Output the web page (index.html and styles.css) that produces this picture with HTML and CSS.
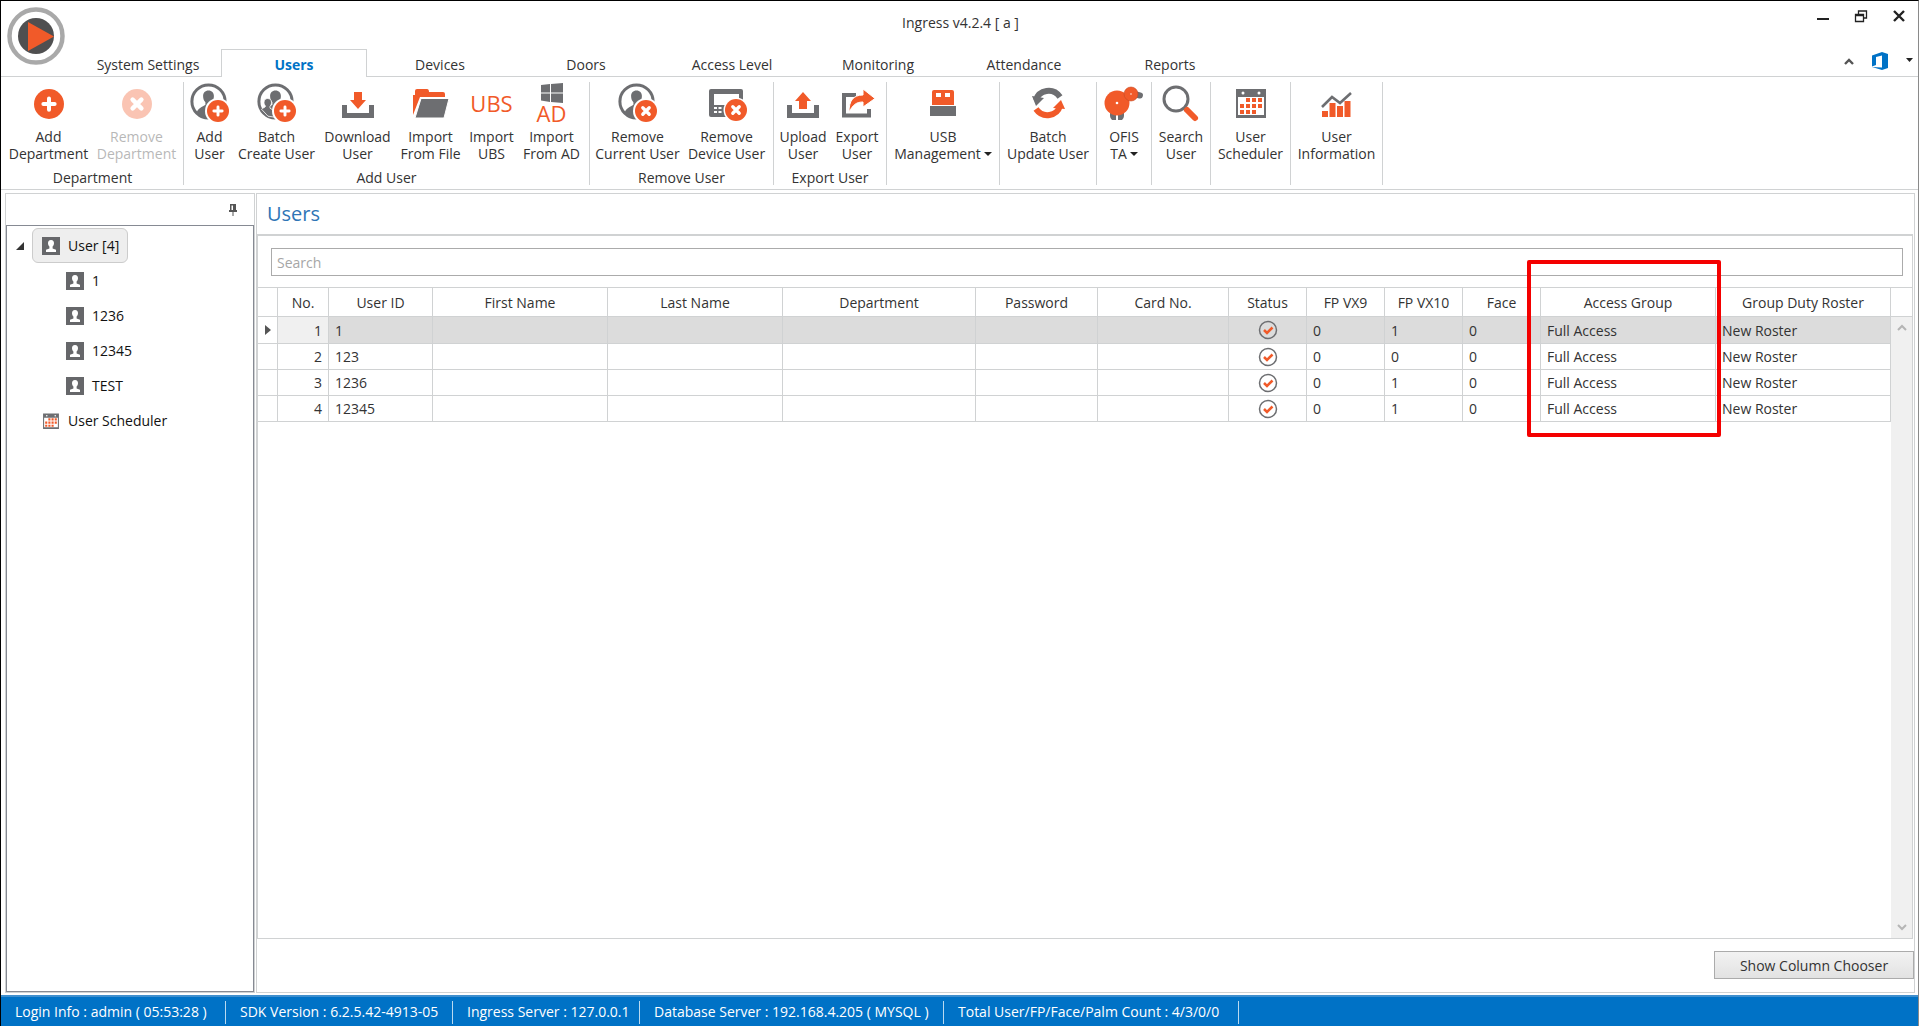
FILE: index.html
```html
<!DOCTYPE html>
<html lang="en">

<head>
    <meta charset="UTF-8">
    <meta name="viewport" content="width=device-width, initial-scale=1.0">
    <title>Ingress v4.2.4 [ a ]</title>
    <link rel="stylesheet" href="styles.css">
</head>

<body>
    <!-- Icon sprite -->
    <svg class="sprite" aria-hidden="true">
        <symbol id="i-plus" viewBox="0 0 24 24">
            <circle cx="12" cy="12" r="12" fill="#f15a29"/>
            <path d="M12 7.500v9M7.500 12h9" stroke="#fff" stroke-width="3.200" stroke-linecap="round"/>
        </symbol>
        <symbol id="i-cross" viewBox="0 0 24 24">
            <circle cx="12" cy="12" r="12" fill="#f15a29"/>
            <path d="M8.500 8.500l7 7M15.500 8.500l-7 7" stroke="#fff" stroke-width="3.600" stroke-linecap="round"/>
        </symbol>
        <symbol id="i-head" viewBox="0 0 40 40">
            <circle cx="18.500" cy="18.500" r="16.600" fill="#fff" stroke="#6d6e71" stroke-width="3"/>
            <path d="M18.500 7.500c3.400 0 5.400 2.400 5.400 5.600 0 2.700-.9 5-2.300 6.200v2.400c2.600 1.600 6.900 2.300 7.900 5.800v5.500l-9 3.400-9.500-1.900-4.500-4c.6-5.500 6.200-6.500 8.900-8.800v-2.400c-1.400-1.200-2.300-3.500-2.300-6.200 0-3.200 2-5.600 5.400-5.600z" fill="#6d6e71"/>
        </symbol>
        <symbol id="i-adduser" viewBox="0 0 40 40">
            <use href="#i-head"/>
            <circle cx="28" cy="28" r="13" fill="#fff"/>
            <use href="#i-plus" x="17" y="17" width="22" height="22"/>
        </symbol>
        <symbol id="i-deluser" viewBox="0 0 40 40">
            <use href="#i-head"/>
            <circle cx="28" cy="28" r="13" fill="#fff"/>
            <use href="#i-cross" x="17" y="17" width="22" height="22"/>
        </symbol>
        <symbol id="i-batchuser" viewBox="0 0 40 40">
            <use href="#i-head"/>
            <path d="M10.500 15.500c2.600 0 4 1.600 4 3.800 0 1.800-.6 2.900-1.500 3.900v2l5 3v6l-7-1-6.500-7c1.500-1.500 3.500-1.500 4-3V23c-1-1-1.500-2-1.500-3.700 0-2.200 1.400-3.800 3.500-3.800z" fill="#6d6e71" stroke="#fff" stroke-width=".8"/>
            <circle cx="28" cy="28" r="13" fill="#fff"/>
            <use href="#i-plus" x="17" y="17" width="22" height="22"/>
        </symbol>
        <symbol id="i-download" viewBox="0 0 40 40">
            <path d="M4 22h5v8h22v-8h5v13H4z" fill="#6d6e71"/>
            <path d="M16 9h8v8h4l-8 9-8-9h4z" fill="#f15a29"/>
        </symbol>
        <symbol id="i-upload" viewBox="0 0 40 40">
            <path d="M4 22h5v8h22v-8h5v13H4z" fill="#6d6e71"/>
            <path d="M16 26h8v-8h4l-8-9-8 9h4z" fill="#f15a29"/>
        </symbol>
        <symbol id="i-folder" viewBox="0 0 40 40">
            <path d="M2 32V12h2V8q0-2 2-2h10q2 0 2 3h14q2 0 2 2v3H9z" fill="#f15a29"/>
            <path d="M10 15.500h28L33 35H4z" fill="#6d6e71" stroke="#fff" stroke-width="1"/>
        </symbol>
        <symbol id="i-deldevice" viewBox="0 0 40 40">
            <path d="M4 6h30q2 0 2 2v24q0 2-2 2H4q-2 0-2-2V8q0-2 2-2z" fill="#6d6e71"/>
            <path d="M7 11h25v11H7z" fill="#fff"/>
            <path d="M7 24h3v2H7zM11.500 24h3v2h-3zM7 28h3v2H7zM11.500 28h3v2h-3z" fill="#fff"/>
            <circle cx="29" cy="27" r="12.500" fill="#fff"/>
            <use href="#i-cross" x="18" y="16" width="22" height="22"/>
        </symbol>
        <symbol id="i-export" viewBox="0 0 40 40">
            <path d="M19 12H7v20.500h25V26" fill="none" stroke="#6d6e71" stroke-width="4"/>
            <path d="M12 29c0-11 4-17 14-17V6l12 9.500L26 24v-5c-7 0-10 3-14 10z" fill="#f15a29" stroke="#fff"/>
        </symbol>
        <symbol id="i-usb" viewBox="0 0 40 40">
            <path d="M9 9q0-2 2-2h18q2 0 2 2v13H9z" fill="#f15a29"/>
            <path d="M13 10h5v4h-5zM22 10h5v4h-5z" fill="#fff"/>
            <path d="M7 23h26v10H7z" fill="#6d6e71"/>
        </symbol>
        <symbol id="i-refresh" viewBox="0 0 40 40">
            <path d="M8 17c3-10 17-13 24-3" fill="none" stroke="#6d6e71" stroke-width="6"/>
            <path d="M4 13l12 2-8 8z" fill="#6d6e71"/>
            <path d="M32 23c-3 10-17 13-24 3" fill="none" stroke="#f15a29" stroke-width="6"/>
            <path d="M25 25l8-8 4 9z" fill="#f15a29"/>
        </symbol>
        <symbol id="i-ofis" viewBox="0 0 40 40">
            <path d="M6 29h6v8H8q-2-2-2-4zM14 29h6v4q0 2-2 4h-4z" fill="#6d6e71"/>
            <rect x="30" y="9" width="9" height="6" rx="3" fill="#6d6e71" transform="rotate(15 34 12)"/>
            <circle cx="13" cy="20" r="12.500" fill="#f15a29"/>
            <circle cx="27" cy="11" r="7" fill="#f15a29" stroke="#c44a25" stroke-width=".6"/>
            <circle cx="13" cy="20" r="1.300" fill="#fff"/>
            <circle cx="27" cy="11" r="1" fill="#f7b49c"/>
        </symbol>
        <symbol id="i-search" viewBox="0 0 40 40">
            <circle cx="15" cy="16" r="12" fill="none" stroke="#6d6e71" stroke-width="3"/>
            <path d="M26 27l8 8" stroke="#f15a29" stroke-width="6" stroke-linecap="round"/>
        </symbol>
        <symbol id="i-calendar" viewBox="0 0 40 40">
            <path d="M5 6h30v29H5z" fill="#6d6e71"/>
            <path d="M7 14h26v18H7z" fill="#fff"/>
            <circle cx="12" cy="10" r="1.500" fill="#fff"/>
            <circle cx="28" cy="10" r="1.500" fill="#fff"/>
            <path d="M15 15h4v4h-4zM21 15h4v4h-4zM27 15h4v4h-4zM9 21h4v4H9zM15 21h4v4h-4zM21 21h4v4h-4zM27 21h4v4h-4zM9 27h4v4H9zM15 27h4v4h-4zM21 27h4v4h-4z" fill="#f15a29"/>
        </symbol>
        <symbol id="i-chart" viewBox="0 0 40 40">
            <path d="M5 28h6v6H5zM12.500 20h6v14h-6zM20 23h6v11h-6zM27.500 18h6v16h-6z" fill="#f15a29"/>
            <path d="M5 24l10-10 8 6L34 10" fill="none" stroke="#6d6e71" stroke-width="2.600"/>
        </symbol>
        <symbol id="i-person" viewBox="0 0 18 18">
            <path d="M0 0h18v18H0z" fill="#66676a"/>
            <path d="M9 3c2.200 0 3 1.400 3 3.200 0 1.600-.8 2.400-1.400 3.300v2l3.400 1.200V15H4v-2.300l3.400-1.200v-2C6.800 8.600 6 7.800 6 6.200 6 4.400 6.800 3 9 3z" fill="#fff"/>
        </symbol>
        <symbol id="i-ok" viewBox="0 0 20 20">
            <circle cx="10" cy="10" r="8.500" fill="none" stroke="#6d6e71" stroke-width="1.500"/>
            <path d="M6 10l3 3 5.500-5.500" fill="none" stroke="#f15a29" stroke-width="2.500"/>
        </symbol>
    </svg>

    <div class="window">
        <header class="titlebar">
            <button class="app-button" aria-label="Application menu">
                <svg viewBox="0 0 58 58">
                    <circle cx="29" cy="29" r="26.500" fill="#fff" stroke="#a9a9a9" stroke-width="4.500"/>
                    <circle cx="29" cy="29" r="18" fill="#4f4f50"/>
                    <path d="M21 15v29l26-14.500z" fill="#f15a29"/>
                </svg>
            </button>
            <div class="titlebar-main">
                <div class="window-title">Ingress v4.2.4 [ a ]</div>
                <nav class="tabs">
                    <button class="tab">System Settings</button>
                    <button class="tab active">Users</button>
                    <button class="tab">Devices</button>
                    <button class="tab">Doors</button>
                    <button class="tab">Access Level</button>
                    <button class="tab">Monitoring</button>
                    <button class="tab">Attendance</button>
                    <button class="tab">Reports</button>
                </nav>
            </div>
            <div class="window-controls">
                <div class="control-row">
                    <button aria-label="Minimize"><svg width="14" height="14"><path d="M1 10h12" stroke="#222" stroke-width="2"/></svg></button>
                    <button aria-label="Restore"><svg width="14" height="14" fill="none" stroke="#222"><path d="M1.500 5.500h8v7h-8zM4.500 5V2h8v7H10M1 6.500h9M4 2h9" stroke-width="1.300"/></svg></button>
                    <button aria-label="Close"><svg width="14" height="14"><path d="M2 2l10 10M12 2L2 12" stroke="#222" stroke-width="2.400"/></svg></button>
                </div>
                <div class="control-row control-row-low">
                    <button aria-label="Collapse ribbon"><svg width="10" height="10"><path d="M1 8l4-4 4 4" fill="none" stroke="#555" stroke-width="2.400"/></svg></button>
                    <button aria-label="Theme"><svg width="16" height="18"><path d="M0 3.500L10 0l6 2v14l-6 2-10-3 10 .5V3.500L4 5v8l-4 1.500z" fill="#0072c6"/></svg></button>
                    <button aria-label="More"><svg width="8" height="6"><path d="M0 0h7L3.500 4z" fill="#222"/></svg></button>
                </div>
            </div>
        </header>

        <div class="ribbon">
            <section class="group group-department">
                <div class="group-items">
                    <button class="tool"><svg class="icon icon-small"><use href="#i-plus"/></svg><span>Add<br>Department</span></button>
                    <button class="tool" disabled><svg class="icon icon-small"><use href="#i-cross"/></svg><span>Remove<br>Department</span></button>
                </div>
                <h2>Department</h2>
            </section>
            <section class="group group-add">
                <div class="group-items">
                    <button class="tool"><svg class="icon"><use href="#i-adduser"/></svg><span>Add<br>User</span></button>
                    <button class="tool"><svg class="icon"><use href="#i-batchuser"/></svg><span>Batch<br>Create User</span></button>
                    <button class="tool"><svg class="icon"><use href="#i-download"/></svg><span>Download<br>User</span></button>
                    <button class="tool"><svg class="icon"><use href="#i-folder"/></svg><span>Import<br>From File</span></button>
                    <button class="tool"><span class="icon glyph">UBS</span><span>Import<br>UBS</span></button>
                    <button class="tool"><span class="icon glyph glyph-ad"><svg width="22" height="20" viewBox="0 0 22 20"><path d="M0 2l9-1v8.500H0zM10 .9L22 0v9.500H10zM0 10.500h9V19l-9-1.500zM10 10.500h12V20l-12-1z" fill="#6d6e71"/></svg>AD</span><span>Import<br>From AD</span></button>
                </div>
                <h2>Add User</h2>
            </section>
            <section class="group group-remove">
                <div class="group-items">
                    <button class="tool"><svg class="icon"><use href="#i-deluser"/></svg><span>Remove<br>Current User</span></button>
                    <button class="tool"><svg class="icon"><use href="#i-deldevice"/></svg><span>Remove<br>Device User</span></button>
                </div>
                <h2>Remove User</h2>
            </section>
            <section class="group group-export">
                <div class="group-items">
                    <button class="tool"><svg class="icon"><use href="#i-upload"/></svg><span>Upload<br>User</span></button>
                    <button class="tool"><svg class="icon"><use href="#i-export"/></svg><span>Export<br>User</span></button>
                </div>
                <h2>Export User</h2>
            </section>
            <section class="group group-usb">
                <button class="tool"><svg class="icon"><use href="#i-usb"/></svg><span>USB<br>Management<i class="caret"></i></span></button>
            </section>
            <section class="group group-update">
                <button class="tool"><svg class="icon"><use href="#i-refresh"/></svg><span>Batch<br>Update User</span></button>
            </section>
            <section class="group group-ofis">
                <button class="tool"><svg class="icon"><use href="#i-ofis"/></svg><span>OFIS<br>TA<i class="caret"></i></span></button>
            </section>
            <section class="group group-search">
                <button class="tool"><svg class="icon"><use href="#i-search"/></svg><span>Search<br>User</span></button>
            </section>
            <section class="group group-scheduler">
                <button class="tool"><svg class="icon"><use href="#i-calendar"/></svg><span>User<br>Scheduler</span></button>
            </section>
            <section class="group group-info">
                <button class="tool"><svg class="icon"><use href="#i-chart"/></svg><span>User<br>Information</span></button>
            </section>
        </div>

        <div class="workspace">
            <aside class="sidebar">
                <div class="sidebar-head">
                    <button aria-label="Pin panel"><svg width="10" height="12"><path d="M2 0h6v6h1v2H1V6h1zM4.500 8h1v4h-1z" fill="#555"/><path d="M3.500 1.500h1.500V6H3.500z" fill="#fff"/></svg></button>
                </div>
                <ul class="tree">
                    <li>
                        <svg class="expander" width="8" height="8"><path d="M8 0v8H0z" fill="#333"/></svg>
                        <span class="node selected"><svg class="node-icon"><use href="#i-person"/></svg>User [4]</span>
                    </li>
                    <li class="child"><span class="node"><svg class="node-icon"><use href="#i-person"/></svg>1</span></li>
                    <li class="child"><span class="node"><svg class="node-icon"><use href="#i-person"/></svg>1236</span></li>
                    <li class="child"><span class="node"><svg class="node-icon"><use href="#i-person"/></svg>12345</span></li>
                    <li class="child"><span class="node"><svg class="node-icon"><use href="#i-person"/></svg>TEST</span></li>
                    <li class="sibling"><span class="node"><svg class="node-icon" viewBox="3 3 34 34"><use href="#i-calendar" width="40" height="40"/></svg>User Scheduler</span></li>
                </ul>
            </aside>

            <main class="content">
                <h1>Users</h1>
                <div class="grid-panel">
                    <div class="search-row">
                        <input class="search" type="text" placeholder="Search" aria-label="Search">
                    </div>
                    <div class="grid">
                        <div class="grid-body">
                            <table>
                                <colgroup>
                                    <col class="w-mark"><col class="w-no"><col class="w-id"><col class="w-name"><col class="w-name">
                                    <col class="w-dept"><col class="w-pass"><col class="w-card"><col class="w-num"><col class="w-num">
                                    <col class="w-num"><col class="w-num"><col class="w-name"><col class="w-name">
                                </colgroup>
                                <thead>
                                    <tr>
                                        <th></th><th>No.</th><th>User ID</th><th>First Name</th><th>Last Name</th><th>Department</th><th>Password</th>
                                        <th>Card No.</th><th>Status</th><th>FP VX9</th><th>FP VX10</th><th>Face</th><th>Access Group</th><th>Group Duty Roster</th>
                                    </tr>
                                </thead>
                                <tbody>
                                    <tr class="current">
                                        <td class="mark"><svg width="6" height="10"><path d="M0 0l6 5-6 5z" fill="#555"/></svg></td>
                                        <td class="no">1</td><td>1</td><td></td><td></td><td></td><td></td><td></td>
                                        <td class="status"><svg width="20" height="20"><use href="#i-ok"/></svg></td>
                                        <td>0</td><td>1</td><td>0</td><td>Full Access</td><td>New Roster</td>
                                    </tr>
                                    <tr>
                                        <td class="mark"></td>
                                        <td class="no">2</td><td>123</td><td></td><td></td><td></td><td></td><td></td>
                                        <td class="status"><svg width="20" height="20"><use href="#i-ok"/></svg></td>
                                        <td>0</td><td>0</td><td>0</td><td>Full Access</td><td>New Roster</td>
                                    </tr>
                                    <tr>
                                        <td class="mark"></td>
                                        <td class="no">3</td><td>1236</td><td></td><td></td><td></td><td></td><td></td>
                                        <td class="status"><svg width="20" height="20"><use href="#i-ok"/></svg></td>
                                        <td>0</td><td>1</td><td>0</td><td>Full Access</td><td>New Roster</td>
                                    </tr>
                                    <tr>
                                        <td class="mark"></td>
                                        <td class="no">4</td><td>12345</td><td></td><td></td><td></td><td></td><td></td>
                                        <td class="status"><svg width="20" height="20"><use href="#i-ok"/></svg></td>
                                        <td>0</td><td>1</td><td>0</td><td>Full Access</td><td>New Roster</td>
                                    </tr>
                                </tbody>
                            </table>
                        </div>
                        <div class="scrollbar">
                            <div class="scroll-track">
                                <svg width="10" height="7"><path d="M1 6l4-4 4 4" fill="none" stroke="#b5b5b5" stroke-width="2"/></svg>
                                <svg width="10" height="7"><path d="M1 1l4 4 4-4" fill="none" stroke="#b5b5b5" stroke-width="2"/></svg>
                            </div>
                        </div>
                    </div>
                    <!-- Marks the access group column -->
                    <div class="callout"></div>
                </div>
                <div class="content-footer">
                    <button class="chooser">Show Column Chooser</button>
                </div>
            </main>
        </div>

        <footer class="statusbar">
            <span>Login Info : admin ( 05:53:28 )</span>
            <span>SDK Version : 6.2.5.42-4913-05</span>
            <span>Ingress Server : 127.0.0.1</span>
            <span>Database Server : 192.168.4.205 ( MYSQL )</span>
            <span>Total User/FP/Face/Palm Count : 4/3/0/0</span>
        </footer>
    </div>
</body>

</html>
```
FILE: styles.css
```css
* {
    box-sizing: border-box;
}

body {
    margin: 0;
    font-family: "Open Sans", "Noto Sans", sans-serif;
    font-size: 14px;
    line-height: 17px;
    color: #333;
    background: #fff;
}

button {
    font: inherit;
    color: inherit;
    background: none;
    border: none;
    padding: 0;
}

svg {
    display: block;
}

.sprite {
    position: absolute;
    width: 0;
    height: 0;
}

.window {
    display: flex;
    flex-direction: column;
    height: 100vh;
    border: 1px solid #000;
    border-right-color: #8a8a8a;
    border-bottom: none;
}

/* Title bar and tabs */
.titlebar {
    display: flex;
    height: 76px;
    border-bottom: 1px solid #d0d2d3;
}

.app-button {
    width: 74px;
    padding: 6px 0 0 6px;
    align-self: flex-start;
}

.app-button svg {
    width: 58px;
    height: 58px;
}

.titlebar-main {
    flex: 1;
    display: flex;
    flex-direction: column;
    justify-content: space-between;
}

.window-title {
    padding-top: 13px;
    padding-left: 40px;
    text-align: center;
}

.tabs {
    display: flex;
    margin-bottom: -1px;
}

.tab {
    width: 146px;
    height: 28px;
    padding-top: 2px;
    border: 1px solid transparent;
    border-bottom: none;
}

.tab.active {
    color: #0072c6;
    font-weight: bold;
    background: #fff;
    border-color: #d0d2d3;
}

.window-controls {
    width: 112px;
}

.control-row {
    display: flex;
    justify-content: flex-end;
    align-items: center;
    gap: 24px;
    height: 30px;
    padding-right: 12px;
}

.control-row-low {
    gap: 18px;
    height: 28px;
    margin-top: 16px;
    padding-right: 4px;
}

/* Ribbon */
.ribbon {
    display: flex;
    height: 113px;
    padding: 5px 0 4px 1px;
    border-bottom: 1px solid #d0d2d3;
}

.group {
    display: flex;
    flex-direction: column;
    justify-content: space-between;
    border-right: 1px solid #d0d2d3;
}

.group-items {
    display: grid;
    justify-content: center;
}

.group h2 {
    margin: 0;
    font-size: 14px;
    font-weight: normal;
    line-height: 15px;
    text-align: center;
}

.group-department {
    width: 182px;
}

.group-department .group-items {
    grid-template-columns: 88px 88px;
}

.group-add {
    width: 406px;
}

.group-add .group-items {
    grid-template-columns: 46px 88px 74px 72px 50px 70px;
}

.group-remove {
    width: 184px;
}

.group-remove .group-items {
    grid-template-columns: 90px 88px;
}

.group-export {
    width: 113px;
}

.group-export .group-items {
    grid-template-columns: 54px 54px;
}

.group-usb {
    width: 113px;
}

.group-update {
    width: 97px;
}

.group-ofis {
    width: 55px;
}

.group-search {
    width: 59px;
}

.group-scheduler {
    width: 80px;
}

.group-info {
    width: 92px;
}

.tool {
    display: flex;
    flex-direction: column;
    align-items: center;
    gap: 5px;
    white-space: nowrap;
}

.tool:disabled {
    opacity: 0.35;
}

.icon {
    width: 40px;
    height: 40px;
    margin-top: 1px;
}

.icon-small {
    width: 30px;
    height: 30px;
    margin: 7px 0 4px;
}

.glyph {
    display: flex;
    flex-direction: column;
    align-items: center;
    justify-content: center;
    font-size: 22px;
    color: #f15a29;
}

.glyph-ad {
    line-height: 20px;
}

.caret {
    display: inline-block;
    margin-left: 3px;
    vertical-align: 3px;
    border: 4px solid transparent;
    border-top-color: #222;
    border-bottom: none;
}

/* Workspace */
.workspace {
    flex: 1;
    display: flex;
    gap: 1px;
    min-height: 0;
    padding: 3px 3px 2px 4px;
}

.sidebar {
    display: flex;
    flex-direction: column;
    width: 250px;
    border: 1px solid #d0d2d3;
}

.sidebar-head {
    display: flex;
    justify-content: flex-end;
    align-items: center;
    height: 31px;
    padding-right: 16px;
}

.tree {
    flex: 1;
    margin: 0;
    padding: 2px 0;
    list-style: none;
    color: #111;
    border: 1px solid #868a93;
}

.tree li {
    display: flex;
    align-items: center;
    height: 35px;
    padding-left: 9px;
}

.expander {
    margin-right: 8px;
}

.node {
    display: flex;
    align-items: center;
    gap: 8px;
    height: 35px;
    padding: 0 8px 0 9px;
    border: 1px solid transparent;
    border-radius: 6px;
}

.node.selected {
    background: #eee;
    border-color: #ccc;
}

.node-icon {
    width: 18px;
    height: 18px;
}

.tree .child {
    padding-left: 49px;
}

.tree .sibling {
    padding-left: 25px;
}

.content {
    flex: 1;
    display: flex;
    flex-direction: column;
    min-width: 0;
    border: 1px solid #d0d2d3;
}

h1 {
    margin: 0;
    padding-left: 10px;
    font-size: 20px;
    font-weight: normal;
    line-height: 40px;
    color: #2e75b6;
}

.grid-panel {
    position: relative;
    flex: 1;
    display: flex;
    flex-direction: column;
    margin-right: 1px;
    border: 1px solid #d0d2d3;
    border-top-width: 2px;
}

.search-row {
    padding: 12px 9px 11px 13px;
}

.search {
    display: block;
    width: 100%;
    height: 28px;
    padding: 0 5px;
    font: inherit;
    border: 1px solid #ababab;
}

.search::placeholder {
    color: #a6a6a6;
}

.grid {
    flex: 1;
    display: flex;
}

.grid-body {
    flex: 1;
    border-top: 1px solid #d0d2d3;
}

table {
    width: 100%;
    table-layout: fixed;
    border-collapse: separate;
    border-spacing: 0;
}

th,
td {
    padding: 0 6px;
    border-right: 1px solid #d0d2d3;
    border-bottom: 1px solid #d0d2d3;
    white-space: nowrap;
}

th {
    height: 29px;
    font-weight: normal;
}

td {
    height: 26px;
}

.w-mark {
    width: 20px;
}

.w-no {
    width: 51px;
}

.w-id {
    width: 104px;
}

.w-name {
    width: 175px;
}

.w-dept {
    width: 193px;
}

.w-pass {
    width: 122px;
}

.w-card {
    width: 131px;
}

.w-num {
    width: 78px;
}

.mark {
    padding: 0 0 0 7px;
}

.no {
    text-align: right;
}

.status svg {
    margin: 0 auto;
}

.current td {
    height: 27px;
    background: #dcdcdc;
}

.current .mark {
    background: #fff;
}

.current .no {
    background: #f0f0f0;
}

.scrollbar {
    display: flex;
    width: 21px;
    padding-top: 28px;
    border-top: 1px solid #d0d2d3;
}

.scroll-track {
    flex: 1;
    display: flex;
    flex-direction: column;
    justify-content: space-between;
    align-items: center;
    padding: 7px 0;
    background: #f0f0f0;
    border-top: 1px solid #d0d2d3;
}

.callout {
    position: absolute;
    top: 24px;
    right: 191px;
    width: 194px;
    height: 177px;
    border: 4px solid #f40000;
    border-radius: 2px;
}

.content-footer {
    display: flex;
    justify-content: flex-end;
    padding: 12px 0 13px;
}

.chooser {
    width: 200px;
    height: 28px;
    background: linear-gradient(#f2f2f2, #e2e2e2);
    border: 1px solid #ababab;
}

/* Status bar */
.statusbar {
    display: grid;
    grid-template-columns: 225px 227px 187px 304px 295px;
    height: 31px;
    padding: 4px 0 2px;
    color: #fff;
    background: #0072c6;
    border-top: 2px solid #3f8fce;
}

.statusbar span {
    padding-left: 14px;
    line-height: 22px;
    white-space: nowrap;
    border-right: 1px solid #b9d9f0;
}
```
